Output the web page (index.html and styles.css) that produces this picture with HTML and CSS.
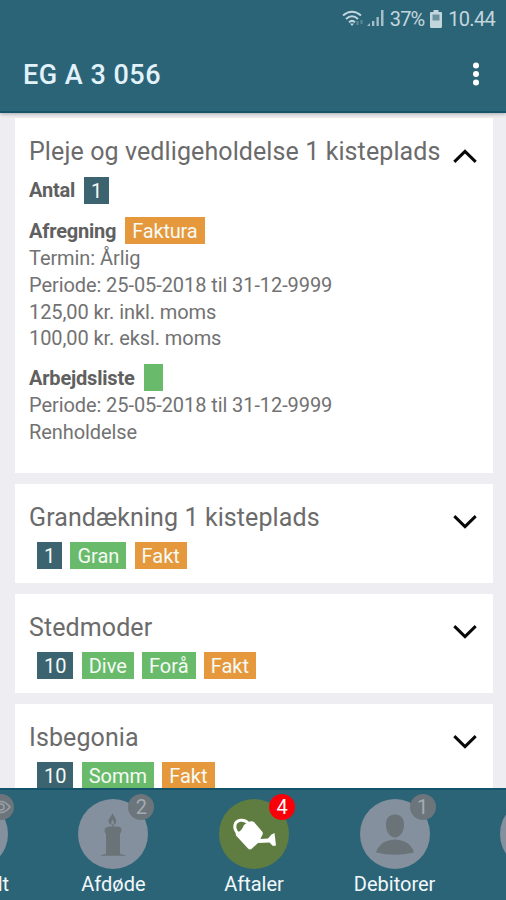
FILE: index.html
```html
<!DOCTYPE html>
<html lang="da">
<head>
<meta charset="utf-8">
<title>EG A 3 056</title>
<link rel="stylesheet" href="styles.css">
</head>
<body>
<div class="app">
  <header class="header">
    <div class="status">
      <svg class="wifi" width="24" height="18" viewBox="0 0 24 18" fill="none" stroke="currentColor" stroke-width="2"><path d="M1 5.500Q10-2 19 5.500M4 9Q10 3.500 16 9M7 12.300Q10 9.500 13 12.300"/><path d="M8 13.500h4l-2 2.500z" fill="currentColor" stroke="none"/><path d="M15.500 11v4M19.500 10v4" opacity=".35"/></svg>
      <svg class="signal" width="18" height="17" viewBox="0 0 18 17" fill="currentColor"><path d="M0 16l3-3v3zM5 11h2.300v5H5zM9.500 7h2.300v9H9.500zM14 0h2.500v16H14z" opacity=".8"/></svg>
      <span class="percent">37%</span>
      <svg class="battery" width="12" height="18" viewBox="0 0 12 18"><path d="M3.500 0h5v2H11q1 0 1 1v13.500q0 1.500-1.500 1.500h-9Q0 18 0 16.500V3q0-1 1-1h2.500z" fill="currentColor"/><path d="M2.500 4.500h7v6h-7z" fill="#6c929f"/></svg>
      <span class="clock">10.44</span>
    </div>
    <div class="bar">
      <h1 class="title">EG A 3 056</h1>
      <svg class="more" width="8" height="24" viewBox="0 0 8 24" fill="#fff"><circle cx="4" cy="3.500" r="3"/><circle cx="4" cy="12" r="3"/><circle cx="4" cy="20.500" r="3"/></svg>
    </div>
  </header>
  <main class="list">
    <section class="card open">
      <div class="head"><h2 class="name">Pleje og vedligeholdelse 1 kisteplads</h2><svg class="chev" width="24" height="14" viewBox="0 0 24 14"><path d="M1.300 12.800L12 2.400l10.700 10.400"/></svg></div>
      <div class="row"><b>Antal</b><span class="tag blue">1</span></div>
      <div class="row gap"><b>Afregning</b><span class="tag orange">Faktura</span></div>
      <p>Termin: Årlig</p>
      <p>Periode: 25-05-2018 til 31-12-9999</p>
      <p>125,00 kr. inkl. moms</p>
      <p>100,00 kr. eksl. moms</p>
      <div class="row gap"><b>Arbejdsliste</b><span class="tag green empty"></span></div>
      <p>Periode: 25-05-2018 til 31-12-9999</p>
      <p>Renholdelse</p>
    </section>
    <section class="card">
      <div class="head"><h2 class="name">Grandækning 1 kisteplads</h2><svg class="chev" width="24" height="14" viewBox="0 0 24 14"><path d="M1.300 1.200L12 11.600 22.700 1.200"/></svg></div>
      <div class="tags"><span class="tag blue">1</span><span class="tag green">Gran</span><span class="tag orange">Fakt</span></div>
    </section>
    <section class="card">
      <div class="head"><h2 class="name">Stedmoder</h2><svg class="chev" width="24" height="14" viewBox="0 0 24 14"><path d="M1.300 1.200L12 11.600 22.700 1.200"/></svg></div>
      <div class="tags"><span class="tag blue">10</span><span class="tag green">Dive</span><span class="tag green">Forå</span><span class="tag orange">Fakt</span></div>
    </section>
    <section class="card">
      <div class="head"><h2 class="name">Isbegonia</h2><svg class="chev" width="24" height="14" viewBox="0 0 24 14"><path d="M1.300 1.200L12 11.600 22.700 1.200"/></svg></div>
      <div class="tags"><span class="tag blue">10</span><span class="tag green">Somm</span><span class="tag orange">Fakt</span></div>
    </section>
  </main>
  <nav class="nav">
    <div class="item first">
      <div class="disc"><span class="badge"><svg width="20" height="14" viewBox="0 0 20 14" fill="none" stroke="#9aa0a5" stroke-width="1.500"><path d="M1 7Q10-4 19 7 10 18 1 7z"/><circle cx="10" cy="7" r="3"/></svg></span></div>
      <span class="label">lt</span>
    </div>
    <div class="item">
      <div class="disc"><svg width="70" height="70" viewBox="0 0 70 70" fill="#697378"><path d="M34.500 14c-.5 3-4 5-4 8 0 2 1.500 3.500 3 4-.5-2 .2-4 1.200-5.500 1.200 2 1.300 3.500.8 5.500 2-.5 3-2.500 2.500-5-.4-2.500-2.500-4-3.500-7z"/><path d="M34.300 25h1.200v3h-1.200zM29 28q6-1.500 13 0 2 1 1.500 4L42 35v20l5 1v.8H23V56l5-1V36l-1.500-4q0-3 2.500-4z"/></svg><span class="badge">2</span></div>
      <span class="label">Afdøde</span>
    </div>
    <div class="item active">
      <div class="disc"><svg width="70" height="70" viewBox="0 0 70 70"><path d="M19 34.500c-5-5-4-12.500 2.500-13.200 4-.4 6.500 1.200 8 3.200" fill="none" stroke="#fff" stroke-width="3"/><path d="M16.500 33.500q5-.5 7-4.500 1.500-4 5-5.500 4-2 6.500-.5L43.500 33q1 2-1 4.500l-1 2.500 7.500-.5 3.500-4 3-1.500L57 46.500l-3 .5-3.500-3.500-11.500.5-6.500 6q-2 1-3.500-.5L17 36.500z" fill="#fff"/></svg><span class="badge">4</span></div>
      <span class="label">Aftaler</span>
    </div>
    <div class="item">
      <div class="disc"><svg width="70" height="70" viewBox="0 0 70 70" fill="#697378"><path d="M35 15.500c6 0 9.500 4 9 11.500-.4 6.500-4.500 11.500-9 11.500S26.400 33.500 26 27c-.5-7.500 3-11.500 9-11.500zM16 53.500Q18.500 45 27 42q8-3 16 0 8.500 3 11 11.500-19 4.500-38 0z"/></svg><span class="badge">1</span></div>
      <span class="label">Debitorer</span>
    </div>
    <div class="item"><div class="disc"></div></div>
  </nav>
</div>
</body>
</html>
```

FILE: styles.css
```css
* { box-sizing: border-box; }
body, h1, h2, p { margin: 0; }
body { font-family: Roboto, sans-serif; background: #eeedf2; overflow: hidden; }
.app { display: flex; flex-direction: column; width: 506px; height: 900px; overflow: hidden; }
.header { flex: none; height: 113px; background: #2c6477; border-bottom: 2px solid #14536a; box-shadow: 0 1px 4px rgba(0,0,0,.3); z-index: 1; }
.status { display: flex; align-items: center; justify-content: flex-end; height: 37px; padding-right: 11px; color: #c3d6de; font-size: 20px; }
.wifi { margin-right: 1px; }
.signal { margin-right: 5px; }
.percent { margin-right: 6px; letter-spacing: -.9px; }
.battery { margin-right: 6px; }
.clock { letter-spacing: -.7px; }
.bar { display: flex; align-items: center; justify-content: space-between; height: 74px; padding: 0 26px 0 23px; }
.title { padding-top: 2px; font-size: 27px; font-weight: 500; letter-spacing: .5px; color: #e2f2fb; }
.list { flex: 1; min-height: 0; overflow: hidden; padding: 5px 13px 0 15px; display: flex; flex-direction: column; gap: 11px; }
.card { flex: none; height: 99px; background: #fff; padding: 17px 15px 0 14px; color: #666; }
.card.open { height: 355px; }
.head { display: flex; align-items: center; justify-content: space-between; height: 34px; }
.name { font-size: 25px; line-height: 34px; font-weight: 400; letter-spacing: .1px; color: #6b6b6b; white-space: nowrap; }
.chev { position: relative; top: 4px; right: 1px; fill: none; stroke: #080808; stroke-width: 3; }
.row { display: flex; align-items: center; gap: 9px; height: 27px; font-size: 20px; letter-spacing: -.2px; }
.open .row:nth-child(2) { height: 42px; }
.row.gap { margin-top: 6px; }
.row b { font-weight: 700; color: #606060; }
.open p { position: relative; top: 1px; font-size: 20px; line-height: 26.800px; letter-spacing: -.08px; color: #727272; white-space: nowrap; }
.open .row.gap:nth-child(8) { margin-top: 13px; }
.tags { display: flex; gap: 8.200px; padding: 7px 0 0 8px; }
.tag { height: 27px; line-height: 28px; padding: 0 7px; font-size: 20px; color: #f5faf5; white-space: nowrap; }
.blue { background: #3c6470; }
.green { background: #69bb6b; }
.orange { background: #e6983c; }
.empty { width: 19px; }
.nav { flex: none; display: flex; justify-content: center; height: 112px; margin: 0 -99px 0 -98px; padding-top: 11px; background: #2c6477; box-shadow: inset 0 2px #14536a; }
.item { flex: none; width: 140.600px; display: flex; flex-direction: column; align-items: center; }
.disc { position: relative; left: .5px; width: 70px; height: 70px; border-radius: 50%; background: #84909d; }
.disc > svg { display: block; }
.badge { position: absolute; top: -5px; right: -6px; display: flex; align-items: center; justify-content: center; width: 26px; height: 26px; border-radius: 50%; background: #6b757b; color: #a2abb1; font-size: 20px; }
.active .disc { background: #5f7d40; }
.active .badge { background: #f90009; color: #fff; }
.label { position: relative; left: .5px; margin-top: 3px; font-size: 20px; line-height: 24px; color: #f1f8fb; }
.first .label { align-self: flex-end; margin-right: 34px; }
```
